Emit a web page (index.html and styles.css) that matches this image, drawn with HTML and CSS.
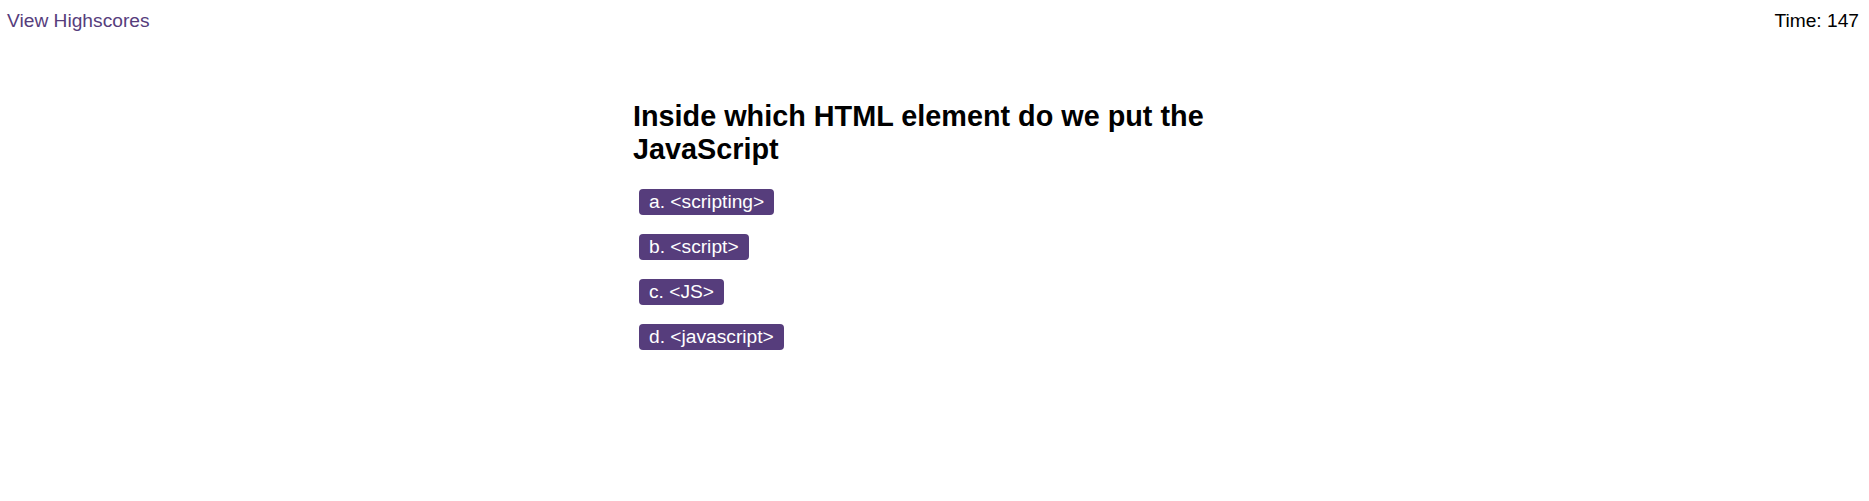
FILE: index.html
```html
<!DOCTYPE html>
<html>
<head>
<meta charset="utf-8">
<link rel="stylesheet" href="styles.css">
</head>
<body>
<header class="top">
  <a class="scores" href="#">View Highscores</a>
  <div class="timer">Time: 147</div>
</header>
<main class="quiz">
  <h2 class="question">Inside which HTML element do we put the JavaScript</h2>
  <div class="choices">
    <button class="choice">a. &lt;scripting&gt;</button>
    <button class="choice">b. &lt;script&gt;</button>
    <button class="choice">c. &lt;JS&gt;</button>
    <button class="choice">d. &lt;javascript&gt;</button>
  </div>
</main>
</body>
</html>
```
FILE: styles.css
```css
html, body {
  margin: 0;
  padding: 0;
  background: #fff;
}
body {
  font-family: "Liberation Sans", Arial, sans-serif;
  font-size: 19.2px;
  color: #000;
}
.top {
  display: flex;
  justify-content: space-between;
  padding: 10px 10px 0 7px;
}
.scores {
  color: #563d7c;
  text-decoration: none;
}
.timer {
  color: #000;
}
.quiz {
  width: 603px;
  margin: 68px auto 0;
}
.question {
  font-size: 28.8px;
  font-weight: bold;
  margin: 0;
}
.choices {
  display: flex;
  flex-direction: column;
  align-items: flex-start;
  gap: 19px;
  margin: 23px 0 0 6px;
}
.choice {
  font-family: "Liberation Sans", Arial, sans-serif;
  font-size: 19.2px;
  color: #fff;
  background: #563d7c;
  border: none;
  border-radius: 4px;
  height: 26px;
  padding: 0 10px;
  line-height: 26px;
  cursor: pointer;
}
```
